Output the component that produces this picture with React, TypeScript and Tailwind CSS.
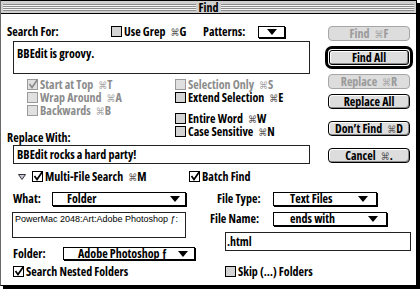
import React from 'react';

const CMD = '\u2318';

function Tri({ className }: { className?: string }) {
  return (
    <svg className={className} width="10" height="6" viewBox="0 0 10 6">
      <polygon points="0,0 10,0 5,6" fill="#000" />
    </svg>
  );
}

function Box({ checked, disabled }: { checked?: boolean; disabled?: boolean }) {
  let cls = 'border-black bg-[#d4d4d4]';
  if (disabled) cls = 'border-[#9a9a9a] bg-[#e0e0e0]';
  else if (checked) cls = 'border-black bg-white';
  return (
    <span className={`relative block w-[11px] h-[11px] shrink-0 border ${cls}`}>
      {checked && (
        <svg className="absolute left-[0px] top-[-1px]" width="11" height="11" viewBox="0 0 11 11">
          <path d="M1.5 5 L4 8.5 L9.5 0.5" fill="none" stroke={disabled ? '#8c8c8c' : '#000'} strokeWidth="1.7" />
        </svg>
      )}
    </span>
  );
}

function Key({ k, disabled }: { k: string; disabled?: boolean }) {
  return (
    <span className="ml-[5px] inline-flex items-center h-[12px] leading-[12px] align-top">
      <span className={`text-[10px] leading-[10px] font-normal ${disabled ? 'text-[#a6a6a6]' : 'text-[#555]'}`}>{CMD}</span>
      {k}
    </span>
  );
}

function CheckRow({
  label,
  k,
  checked,
  disabled,
  className,
}: {
  label: string;
  k?: string;
  checked?: boolean;
  disabled?: boolean;
  className?: string;
}) {
  return (
    <div className={`flex items-center gap-[2px] h-[13px] ${className ?? ''}`}>
      <Box checked={checked} disabled={disabled} />
      <span className={`flex items-center h-[12px] text-[12px] leading-[12px] font-bold whitespace-nowrap ${disabled ? 'text-[#8c8c8c]' : 'text-black'}`}>
        {label}
        {k && <Key k={k} disabled={disabled} />}
      </span>
    </div>
  );
}

function Btn({ children, disabled }: { children: React.ReactNode; disabled?: boolean }) {
  return (
    <div
      className={`h-[15px] w-[82px] rounded-[4px] border flex items-center justify-center text-[12px] leading-[12px] font-bold bg-[#dddddd] whitespace-nowrap ${
        disabled
          ? 'border-[#a6a6a6] text-[#9a9a9a]'
          : 'border-black text-black shadow-[inset_-1px_-1px_0_#8a8a8a,inset_1px_1px_0_#ffffff]'
      }`}
    >
      {children}
    </div>
  );
}

export default function App() {
  return (
    <div className="w-[420px] h-[289px] bg-white overflow-hidden text-black font-['Open_Sans','DejaVu_Sans',sans-serif] font-stretch-condensed">
      <div className="w-[417px] h-[286px] border border-black border-l-[#6a6a6a] shadow-[3px_3px_0_#000] bg-white flex flex-col">
        {/* title bar */}
        <div className="flex items-center h-[13px] shrink-0 border-b border-black bg-[#cfcfcf] px-[2px]">
          <div className="flex-1 h-[7px] bg-[repeating-linear-gradient(to_bottom,#8c8c8c_0px,#8c8c8c_1px,#f4f4f4_1px,#f4f4f4_2px)]" />
          <span className="px-[3px] text-[12px] leading-[11px] font-bold">Find</span>
          <div className="flex-1 h-[7px] bg-[repeating-linear-gradient(to_bottom,#8c8c8c_0px,#8c8c8c_1px,#f4f4f4_1px,#f4f4f4_2px)]" />
        </div>

        {/* top part */}
        <div className="flex">
          <div className="ml-[6px] w-[303px]">
            <div className="mt-[11px] flex items-center h-[13px]">
              <span className="w-[104px] text-[12px] leading-[13px] font-bold">Search For:</span>
              <div className="w-[92px]">
                <CheckRow label="Use Grep" k="G" />
              </div>
              <span className="w-[55px] text-[12px] leading-[13px] font-bold">Patterns:</span>
              <div className="w-[27px] h-[12px] border border-black bg-white shadow-[1px_1px_0_#000] flex items-center justify-center">
                <Tri />
              </div>
            </div>
            <div className="mt-[3px] ml-[6px] w-[297px] h-[33px] border border-[#222] pl-[3px] pt-[5px] text-[12px] leading-[14px] font-bold">
              BBEdit is groovy.
            </div>
            <div className="flex items-start">
              <div className="w-[168px]">
                <div className="pl-[20px] pt-[4px]">
                  <CheckRow label="Start at Top" k="T" checked disabled />
                  <CheckRow label="Wrap Around" k="A" disabled />
                  <CheckRow label="Backwards" k="B" disabled />
                </div>
                <div className="mt-[14px] h-[13px] text-[12px] leading-[13px] font-bold">Replace With:</div>
              </div>
              <div className="pt-[4px]">
                <CheckRow label="Selection Only" k="S" disabled />
                <CheckRow label="Extend Selection" k="E" />
                <CheckRow label="Entire Word" k="W" className="mt-[8px] h-[12px]" />
                <CheckRow label="Case Sensitive" k="N" className="h-[12px]" />
              </div>
            </div>
            <div className="mt-[1px] ml-[6px] w-[297px] h-[19px] border border-[#222] pl-[3px] flex items-center text-[12px] leading-[14px] font-bold">
              BBEdit rocks a hard party!
            </div>
          </div>

          <div className="ml-[15px] w-[88px] flex flex-col items-center">
            <div className="mt-[12px]">
              <Btn disabled>
                Find
                <Key k="F" disabled />
              </Btn>
            </div>
            <div className="mt-[5px] w-[88px] h-[23px] border-[3px] border-black rounded-[7px] p-[1px]">
              <div className="h-[15px] w-full rounded-[3px] border border-black bg-[#dddddd] flex items-center justify-center text-[12px] leading-[12px] font-bold shadow-[inset_-1px_-1px_0_#8a8a8a,inset_1px_1px_0_#ffffff]">
                Find All
              </div>
            </div>
            <div className="mt-[5px]">
              <Btn disabled>
                Replace
                <Key k="R" disabled />
              </Btn>
            </div>
            <div className="mt-[5px]">
              <Btn>Replace All</Btn>
            </div>
            <div className="mt-[12px]">
              <Btn>
                Don’t Find
                <Key k="D" />
              </Btn>
            </div>
            <div className="mt-[12px]">
              <Btn>
                Cancel
                <Key k="." />
              </Btn>
            </div>
          </div>
        </div>

        {/* multi-file part */}
        <div className="mt-[6px] flex items-center h-[13px] pl-[17px]">
          <svg width="8" height="6" viewBox="0 0 8 6">
            <polygon points="0.5,0.5 7.5,0.5 4,5.5" fill="#c8c8d8" stroke="#333" strokeWidth="1" />
          </svg>
          <div className="ml-[6px] w-[157px]">
            <CheckRow label="Multi-File Search" k="M" checked />
          </div>
          <CheckRow label="Batch Find" checked />
        </div>

        <div className="flex mt-[9px]">
          <div className="ml-[11px] w-[198px]">
            <div className="flex items-start h-[15px]">
              <span className="w-[40px] pl-[1px] text-[12px] leading-[14px] font-bold">What:</span>
              <div className="w-[134px] h-[14px] border border-black bg-white shadow-[1px_1px_0_#000] flex items-center justify-between pl-[14px] pr-[5px] text-[12px] leading-[12px] font-bold whitespace-nowrap">
                Folder
                <Tri />
              </div>
            </div>
            <div className="mt-[5px] w-[174px] h-[26px] border border-[#222] pl-[2px] pt-[1px] text-[9px] leading-[10px] font-['Liberation_Sans',sans-serif] whitespace-nowrap">
              PowerMac 2048:Art:Adobe Photoshop ƒ:
            </div>
            <div className="mt-[9px] flex items-center h-[13px]">
              <span className="w-[51px] pl-[1px] text-[12px] leading-[13px] font-bold">Folder:</span>
              <div className="w-[132px] h-[13px] border border-black bg-white shadow-[1px_1px_0_#000] flex items-center justify-between pl-[14px] pr-[6px] text-[12px] leading-[11px] font-bold whitespace-nowrap">
                Adobe Photoshop ƒ
                <Tri />
              </div>
            </div>
            <CheckRow label="Search Nested Folders" checked className="mt-[5px] ml-[1px]" />
          </div>

          <div className="w-[201px]">
            <div className="flex items-start h-[15px]">
              <span className="w-[63px] pl-[7px] text-[12px] leading-[14px] font-bold whitespace-nowrap">File Type:</span>
              <div className="w-[104px] h-[14px] border border-black bg-white shadow-[1px_1px_0_#000] flex items-center justify-between pl-[16px] pr-[8px] text-[12px] leading-[12px] font-bold whitespace-nowrap">
                Text Files
                <Tri />
              </div>
            </div>
            <div className="mt-[5px] flex items-start h-[15px]">
              <span className="w-[63px] text-[12px] leading-[14px] font-bold whitespace-nowrap">File Name:</span>
              <div className="w-[114px] h-[14px] border border-black bg-white shadow-[1px_1px_0_#000] flex items-center justify-between pl-[16px] pr-[8px] text-[12px] leading-[12px] font-bold whitespace-nowrap">
                ends with
                <Tri />
              </div>
            </div>
            <div className="mt-[5px] ml-[15px] w-[186px] h-[19px] border border-[#222] pl-[1px] flex items-center text-[12px] leading-[14px] font-bold">
              .html
            </div>
            <CheckRow label="Skip (…) Folders" className="mt-[14px] ml-[15px]" />
          </div>
        </div>
      </div>
    </div>
  );
}
